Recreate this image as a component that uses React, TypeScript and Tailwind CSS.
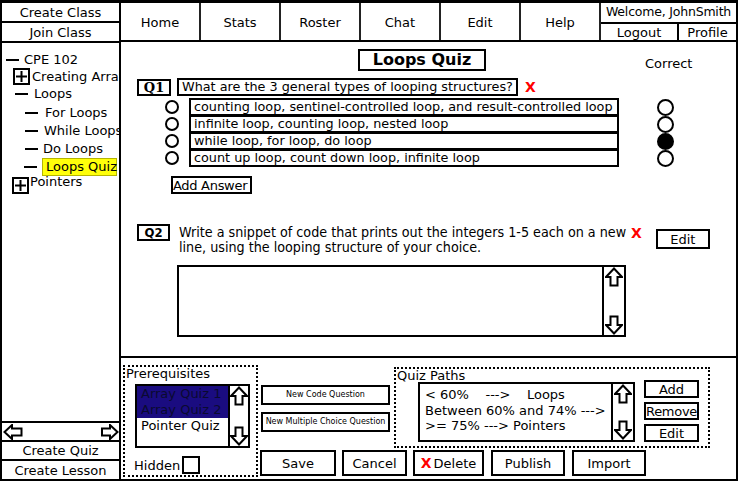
import React from "react";

const UpArrow = ({ w = 18, h = 20 }: { w?: number; h?: number }) => (
  <svg width={w} height={h} viewBox="0 0 18 20" className="block">
    <polygon points="9,1.5 17,10 12.5,10 12.5,18.5 5.5,18.5 5.5,10 1,10" fill="white" stroke="black" strokeWidth="2" />
  </svg>
);
const DownArrow = ({ w = 18, h = 20 }: { w?: number; h?: number }) => (
  <svg width={w} height={h} viewBox="0 0 18 20" className="block">
    <polygon points="9,18.5 17,10 12.5,10 12.5,1.5 5.5,1.5 5.5,10 1,10" fill="white" stroke="black" strokeWidth="2" />
  </svg>
);
const LeftArrow = () => (
  <svg width="20" height="16" viewBox="0 0 20 16" className="block">
    <polygon points="1.5,8 9,1 9,4.5 18.5,4.5 18.5,11.5 9,11.5 9,15" fill="white" stroke="black" strokeWidth="2" />
  </svg>
);
const RightArrow = () => (
  <svg width="18" height="16" viewBox="0 0 18 16" className="block">
    <polygon points="16.5,8 9,1 9,4.5 1,4.5 1,11.5 9,11.5 9,15" fill="white" stroke="black" strokeWidth="2" />
  </svg>
);

const VScroll = ({ w }: { w: string }) => (
  <div className={`${w} h-full border-l-2 border-black flex flex-col items-center justify-between`}>
    <UpArrow />
    <DownArrow />
  </div>
);

const Plus = () => (
  <div className="w-[17px] h-[17px] border-2 border-black flex items-center justify-center shrink-0">
    <svg width="11" height="11" viewBox="0 0 11 11" className="block">
      <path d="M0 5.5H11M5.5 0V11" stroke="black" strokeWidth="2" />
    </svg>
  </div>
);

const Dash = () => <div className="w-[13px] h-[2px] bg-black shrink-0" />;

const Radio = () => <div className="w-[14px] h-[14px] rounded-full border-2 border-black shrink-0" />;

const answers = [
  "counting loop, sentinel-controlled loop, and result-controlled loop",
  "infinite loop, counting loop, nested loop",
  "while loop, for loop, do loop",
  "count up loop, count down loop, infinite loop",
];

export default function App() {
  return (
    <div className="w-[739px] h-[483px] bg-white overflow-hidden font-['DejaVu_Sans',sans-serif] text-black text-[13px]">
      <div className="w-[738px] h-[481px] border-t-[3px] border-l-2 border-r-2 border-b-2 border-black flex">
        {/* Sidebar */}
        <div className="w-[119px] border-r-2 border-black flex flex-col overflow-hidden shrink-0">
          <div className="h-[20px] border-b-2 border-black flex items-center justify-center leading-none">Create Class</div>
          <div className="h-[20px] border-b-2 border-black flex items-center justify-center leading-none">Join Class</div>
          <div className="flex-1 whitespace-nowrap">
            <div className="mt-[8px] h-[17px] flex items-center pl-[4px]">
              <Dash />
              <span className="ml-[5px]">CPE 102</span>
            </div>
            <div className="h-[17px] flex items-center pl-[11px]">
              <Plus />
              <span className="ml-[2px]">Creating Arrays</span>
            </div>
            <div className="h-[18px] flex items-center pl-[13px]">
              <Dash />
              <span className="ml-[6px]">Loops</span>
            </div>
            <div className="h-[19px] flex items-center pl-[23px]">
              <Dash />
              <span className="ml-[7px]">For Loops</span>
            </div>
            <div className="h-[17px] flex items-center pl-[23px]">
              <Dash />
              <span className="ml-[6px]">While Loops</span>
            </div>
            <div className="h-[19px] flex items-center pl-[23px]">
              <Dash />
              <span className="ml-[5px]">Do Loops</span>
            </div>
            <div className="h-[18px] flex items-center pl-[22px]">
              <Dash />
              <span className="ml-[5px] h-[18px] w-[75px] bg-[#ffff0a] border border-[#b5b500] flex items-center pl-[3px]">Loops Quiz</span>
            </div>
            <div className="mt-[1px] h-[17px] flex items-start pl-[10px]">
              <Plus />
              <span className="ml-[1px] -mt-[4px] leading-[18px]">Pointers</span>
            </div>
          </div>
          <div className="h-[21px] border-t-2 border-b-2 border-black flex items-center justify-between pl-[1px] pr-[0px]">
            <LeftArrow />
            <RightArrow />
          </div>
          <div className="h-[19px] border-b-2 border-black flex items-center justify-center leading-none">Create Quiz</div>
          <div className="h-[18px] flex items-center justify-center leading-none">Create Lesson</div>
        </div>

        {/* Main column */}
        <div className="flex-1 flex flex-col">
          {/* Nav */}
          <div className="h-[39px] border-b-2 border-black flex shrink-0">
            {["Home", "Stats", "Roster", "Chat", "Edit", "Help"].map((t) => (
              <div key={t} className="w-[80px] h-full border-r-2 border-[#222] flex items-center justify-center leading-none pt-[1px]">
                {t}
              </div>
            ))}
            <div className="flex-1 flex flex-col">
              <div className="h-[21px] border-b-2 border-black flex items-center justify-center leading-none text-[12.5px] tracking-[-0.2px] whitespace-nowrap">
                Welcome, JohnSmith
              </div>
              <div className="flex-1 flex">
                <div className="w-[78px] border-r-2 border-black flex items-center justify-center leading-none">Logout</div>
                <div className="flex-1 flex items-center justify-center leading-none">Profile</div>
              </div>
            </div>
          </div>

          {/* Content */}
          <div className="h-[314px] shrink-0">
            <div className="flex items-start">
              <div className="ml-[237px] mt-[7px] w-[128px] h-[22px] border-2 border-black flex items-center justify-center font-bold text-[16px] leading-none">
                Loops Quiz
              </div>
              <div className="ml-[159px] mt-[14px] leading-[16px]">Correct</div>
            </div>

            <div className="mt-[6px] ml-[16px] flex items-center h-[18px]">
              <div className="w-[34px] h-[17px] border-2 border-black flex items-center justify-center font-['DejaVu_Serif',serif] font-bold text-[13px] leading-none">
                Q1
              </div>
              <div className="ml-[6px] w-[341px] h-[18px] border-2 border-black flex items-center pl-[3px] text-[12.8px] leading-none whitespace-nowrap">
                What are the 3 general types of looping structures?
              </div>
              <span className="ml-[7px] text-[#ff0000] font-bold text-[14px] leading-none">X</span>
            </div>

            <div className="mt-[2px]">
              {answers.map((a, i) => (
                <div key={i} className={`flex items-center h-[18px] ml-[44px] ${i > 0 ? "-mt-[1px]" : ""}`}>
                  <Radio />
                  <div className="ml-[10px] w-[430px] h-[18px] border-2 border-black flex items-center pl-[3px] text-[12.8px] leading-none whitespace-nowrap">
                    {a}
                  </div>
                  <div
                    className={`ml-[38px] w-[17px] h-[17px] rounded-full border-2 border-black ${i === 2 ? "bg-black" : "bg-white"}`}
                  />
                </div>
              ))}
            </div>

            <div className="mt-[9px] ml-[50px] w-[81px] h-[18px] border-2 border-black flex items-center justify-start pl-[0px] leading-none whitespace-nowrap tracking-[-0.3px]">
              Add Answer
            </div>

            <div className="mt-[30px] ml-[16px] flex items-start">
              <div className="w-[33px] h-[17px] border-2 border-black flex items-center justify-center font-bold text-[13px] leading-none font-stretch-condensed font-['DejaVu_Sans_Condensed','DejaVu_Sans',sans-serif]">
                Q2
              </div>
              <div className="ml-[9px] w-[450px] text-[14.2px] leading-[15px] whitespace-nowrap font-stretch-condensed font-['DejaVu_Sans_Condensed','DejaVu_Sans',sans-serif] pt-[1px]">
                Write a snippet of code that prints out the integers 1-5 each on a new
                <br />
                line, using the looping structure of your choice.
              </div>
              <span className="ml-[2px] mt-[2px] text-[#ff0000] font-bold text-[14px] leading-none">X</span>
              <div className="ml-[14px] mt-[5px] w-[54px] h-[20px] border-2 border-black flex items-center justify-center leading-none">
                Edit
              </div>
            </div>

            <div className="mt-[10px] ml-[56px] w-[449px] h-[72px] border-2 border-black flex justify-end">
              <VScroll w="w-[22px]" />
            </div>
          </div>

          {/* Bottom panel */}
          <div className="flex-1 border-t-2 border-black flex items-start">
            <div className="ml-[2px] mt-[7px] w-[135px] h-[112px] border-2 border-dotted border-black">
              <div className="pl-[1px] leading-[14px]">Prerequisites</div>
              <div className="ml-[10px] mt-[3px] w-[115px] h-[64px] border-2 border-black flex">
                <div className="flex-1 leading-[16px]">
                  <div className="bg-[#1a0c80] text-[#0a0a30] pl-[4px]">Array Quiz 1</div>
                  <div className="bg-[#1a0c80] text-[#0a0a30] pl-[4px]">Array Quiz 2</div>
                  <div className="pl-[4px]">Pointer Quiz</div>
                </div>
                <VScroll w="w-[20px]" />
              </div>
              <div className="mt-[8px] ml-[9px] flex items-center">
                <span className="leading-none">Hidden</span>
                <div className="ml-[2px] w-[18px] h-[18px] border-2 border-black" />
              </div>
            </div>

            <div className="ml-[2px] flex flex-col">
              <div className="flex items-start mt-[7px]">
                <div className="ml-[1px] mt-[20px] flex flex-col gap-[7px]">
                  <div className="w-[129px] h-[20px] border-2 border-black flex items-center justify-center text-[8px] leading-none">
                    New Code Question
                  </div>
                  <div className="w-[129px] h-[20px] border-2 border-black flex items-center justify-center text-[8px] leading-none">
                    New Multiple Choice Question
                  </div>
                </div>
                <div className="ml-[4px] mt-[2px] w-[316px] h-[81px] border-2 border-dotted border-black">
                  <div className="pl-[1px] leading-[13px]">Quiz Paths</div>
                  <div className="flex items-start">
                    <div className="ml-[22px] w-[217px] h-[60px] border-2 border-black flex">
                      <div className="flex-1 pl-[5px] pt-[3px] leading-[15.5px] whitespace-pre">
                        <div>{"< 60%    --->    Loops"}</div>
                        <div>{"Between 60% and 74% --->"}</div>
                        <div>{">= 75% ---> Pointers"}</div>
                      </div>
                      <VScroll w="w-[22px]" />
                    </div>
                    <div className="ml-[9px] -mt-[2px] flex flex-col gap-[4px]">
                      <div className="w-[55px] h-[18px] border-2 border-black flex items-center justify-center leading-none">Add</div>
                      <div className="w-[55px] h-[18px] border-2 border-black flex items-center justify-center leading-none tracking-[-0.3px]">Remove</div>
                      <div className="w-[55px] h-[18px] border-2 border-black flex items-center justify-center leading-none">Edit</div>
                    </div>
                  </div>
                </div>
              </div>
              <div className="mt-[2px] flex">
                <div className="w-[76px] h-[26px] border-2 border-black flex items-center justify-center leading-none">Save</div>
                <div className="ml-[6px] w-[65px] h-[26px] border-2 border-black flex items-center justify-center leading-none">Cancel</div>
                <div className="ml-[6px] w-[71px] h-[26px] border-2 border-black flex items-center justify-center leading-none">
                  <span className="text-[#ff0000] font-bold text-[14px]">X</span>
                  <span className="ml-[2px]">Delete</span>
                </div>
                <div className="ml-[7px] w-[74px] h-[26px] border-2 border-black flex items-center justify-center leading-none">Publish</div>
                <div className="ml-[7px] w-[74px] h-[26px] border-2 border-black flex items-center justify-center leading-none">Import</div>
              </div>
            </div>
          </div>
        </div>
      </div>
    </div>
  );
}
